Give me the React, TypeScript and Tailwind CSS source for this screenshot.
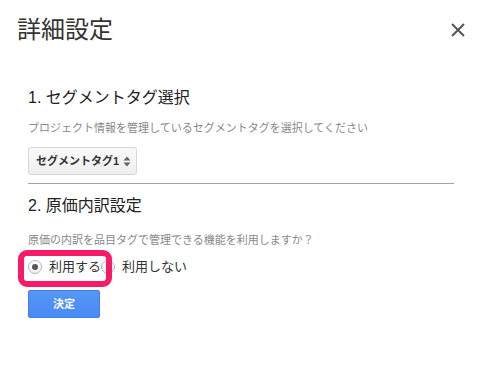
import React from "react";

function CloseIcon() {
  return (
    <svg width="16" height="16" viewBox="0 0 16 16" className="block">
      <path d="M2 2 L14 14 M14 2 L2 14" stroke="#555" strokeWidth="2" />
    </svg>
  );
}

function UpDown() {
  return (
    <svg width="8" height="11" viewBox="0 0 8 11" className="block shrink-0">
      <path d="M4 0.5 L7.5 4.5 L0.5 4.5 Z" fill="#666" />
      <path d="M4 10.5 L7.5 6.5 L0.5 6.5 Z" fill="#666" />
    </svg>
  );
}

function Radio({ checked }: { checked?: boolean }) {
  return (
    <span className="w-[14px] h-[14px] rounded-full border border-[#b5b5b5] bg-gradient-to-b from-white to-[#f0f0f0] flex items-center justify-center shrink-0">
      {checked && <span className="w-[6px] h-[6px] rounded-full bg-[#555]" />}
    </span>
  );
}

export default function App() {
  return (
    <div
      className="relative w-[481px] h-[370px] bg-white text-[#333] overflow-hidden"
      style={{ fontFamily: '"Liberation Sans", "Noto Sans CJK JP", sans-serif' }}
    >
      <div className="h-[60px] flex items-center justify-between pl-[17px] pr-[15px]">
        <h1 className="text-[24px] leading-none text-[#333] font-normal">詳細設定</h1>
        <CloseIcon />
      </div>

      <div className="px-[28px]">
        <h2 className="mt-[28px] h-[20px] flex items-center text-[16px] text-[#222]">
          1. セグメントタグ選択
        </h2>
        <p className="mt-[10px] h-[20px] flex items-center text-[11px] text-[#888]">
          プロジェクト情報を管理しているセグメントタグを選択してください
        </p>
        <div className="mt-[9px] w-[109px] h-[28px] border border-[#d6d6d6] rounded-[3px] bg-gradient-to-b from-[#f9f9f9] to-[#efefef] flex items-center justify-between pl-[7px] pr-[5px]">
          <span className="text-[11px] font-bold text-[#333] whitespace-nowrap">セグメントタグ1</span>
          <UpDown />
        </div>
        <div className="mt-[8px] w-[426px] border-t border-[#a3a3a3]" />

        <h2 className="mt-[12px] h-[20px] flex items-center text-[16px] text-[#222]">
          2. 原価内訳設定
        </h2>
        <p className="mt-[14px] h-[20px] flex items-center text-[11px] text-[#888]">
          原価の内訳を品目タグで管理できる機能を利用しますか？
        </p>
        <div className="mt-[7px] h-[20px] flex items-center text-[13px] text-[#333]">
          <Radio checked />
          <span className="ml-[7px]">利用する</span>
          <Radio />
          <span className="ml-[7px]">利用しない</span>
        </div>
        <button className="mt-[13px] w-[72px] h-[28px] rounded-[2px] border border-[#3b7fe8] bg-gradient-to-b from-[#5596f7] to-[#4a8af4] text-white text-[11px] font-bold flex items-center justify-center">
          決定
        </button>
      </div>

      <div className="absolute left-[18px] top-[250px] w-[94px] h-[37px] border-[6px] border-[#f61b68] rounded-[9px]" />
    </div>
  );
}
